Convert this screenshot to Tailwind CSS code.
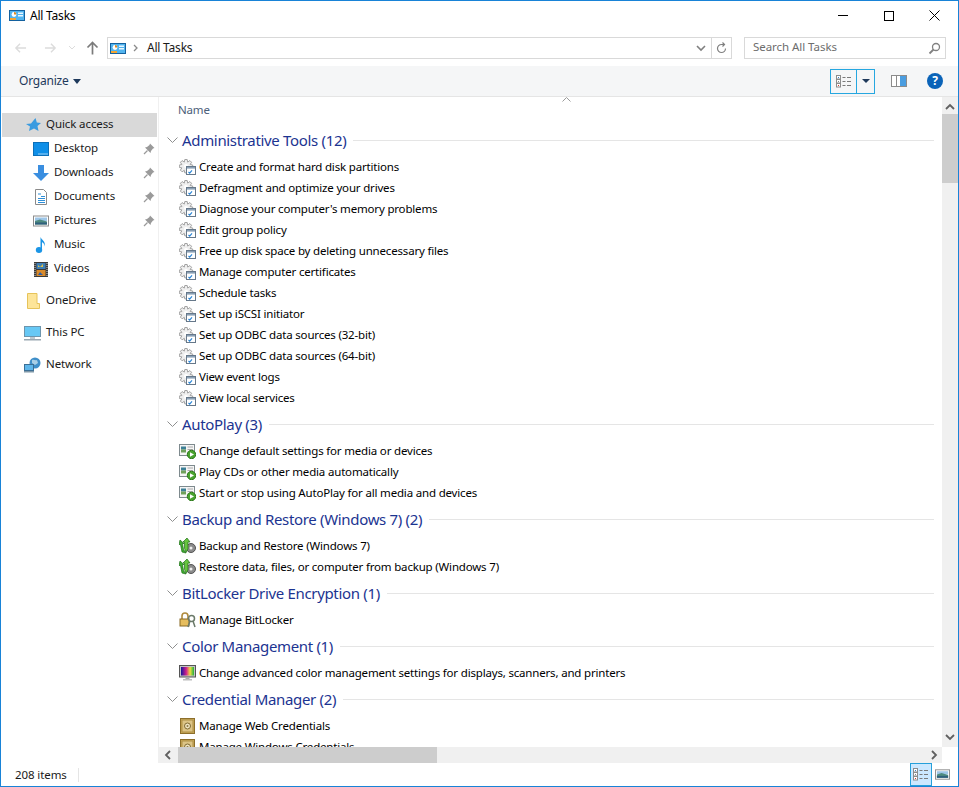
<!DOCTYPE html>
<html><head><meta charset="utf-8">
<script src="https://cdn.jsdelivr.net/npm/@tailwindcss/browser@4"></script>
</head>
<body class="m-0 bg-white">
<svg class="absolute w-0 h-0" width="0" height="0">
<defs><linearGradient id="rb" x1="0" x2="1" y1="0" y2="0"><stop offset="0" stop-color="#14149c"/><stop offset=".4" stop-color="#d0208c"/><stop offset=".7" stop-color="#f0e040"/><stop offset="1" stop-color="#20b040"/></linearGradient></defs>
<symbol id="cp" viewBox="0 0 16 11"><rect x="0.500" y="0.500" width="15" height="10" fill="#52b4ee" stroke="#14619f"/><circle cx="5" cy="4.500" r="2.400" fill="#fff"/><path d="M5 4.500V2.100A2.400 2.400 0 0 1 7.400 4.500Z" fill="#e08a20"/><rect x="9" y="2.500" width="5" height="1.500" fill="#e8f6ff"/><rect x="9" y="5" width="5" height="1.500" fill="#e8f6ff"/><rect x="1" y="8" width="6" height="2" fill="#f3a530"/></symbol>
<symbol id="gear" viewBox="0 0 17 16"><path d="M5.800 .5h2.400l.5 2.600 2.200-1.500 1.700 1.700-1.500 2.200 2.600.5v2.400l-2.600.5 1.500 2.200-1.700 1.700-2.200-1.500-.5 2.600H5.800l-.5-2.600-2.200 1.500-1.700-1.700 1.500-2.200-2.600-.5V6l2.600-.5L1.400 3.300l1.700-1.700 2.200 1.500z" fill="#efefef" stroke="#a2a2a2"/><circle cx="7" cy="7" r="2" fill="#fff"/><rect x="7.500" y="7.500" width="9" height="8" fill="#fff" stroke="#66788a"/><rect x="8" y="8" width="8" height="1.600" fill="#8aa0b5"/><path d="M9.500 13l1.200 1.200 2.300-2.800" fill="none" stroke="#2c86d6" stroke-width="1.200"/></symbol>
<symbol id="play" viewBox="0 0 17 16"><rect x="0.500" y="1.500" width="15" height="11" fill="#f5f5f5" stroke="#7e8a8e"/><rect x="2" y="3.500" width="5" height="3" fill="#3c7f96"/><rect x="2" y="6.500" width="5" height="3" fill="#6fa05a"/><path d="M8.500 4h5.500M8.500 6.500h5.500M8.500 9h2" stroke="#a8a8a8"/><circle cx="12.500" cy="11.500" r="4.200" fill="#4aa32f" stroke="#2e7a1c"/><path d="M11 9.300l4 2.200-4 2.200z" fill="#fff"/></symbol>
<symbol id="backup" viewBox="0 0 17 16"><circle cx="12" cy="10" r="4.500" fill="#8b8b8b" stroke="#555"/><circle cx="12" cy="10" r="1.500" fill="#eee"/><path d="M1 2l4 3.500H3.500l1 6 2.500 3.500-4-1-1.500-7.500H0z" fill="#3fae2f" stroke="#1f6f18" stroke-width=".7"/><path d="M8 0l3 4H9v7l-2 3.500-1.500-4V4H4z" fill="#66c43e" stroke="#1f6f18" stroke-width=".7"/></symbol>
<symbol id="lock" viewBox="0 0 17 16"><path d="M3 7V4a3 3 0 0 1 6 0v3" fill="none" stroke="#b08b3d" stroke-width="1.600"/><rect x="1" y="7" width="9" height="7" fill="#e6bd5d" stroke="#8a6a25"/><circle cx="12.500" cy="6.500" r="3" fill="none" stroke="#6b7a6a" stroke-width="1.500"/><path d="M11 9l-2 6M14 9l2 6" stroke="#6b7a6a" stroke-width="1.500"/></symbol>
<symbol id="color" viewBox="0 0 17 16"><rect x="0.500" y="0.500" width="16" height="11.500" fill="#c4c4c4" stroke="#555"/><rect x="2" y="2" width="13" height="8.500" fill="url(#rb)"/><rect x="6.500" y="12" width="4" height="2" fill="#aaa"/><rect x="4" y="14" width="9" height="1.500" fill="#bdbdbd"/></symbol>
<symbol id="cred" viewBox="0 0 17 16"><rect x="1.500" y="0.500" width="14" height="15" fill="#c9a85a" stroke="#8d6f2b"/><rect x="3" y="2" width="11" height="12" fill="#dcc486" stroke="#ae8f45"/><circle cx="8.500" cy="8" r="3" fill="#efe4c2" stroke="#7f6a33"/><circle cx="8.500" cy="8" r="1" fill="#8d7a45"/></symbol>
<symbol id="pin" viewBox="0 0 12 12"><path d="M7 .5l4.500 4.500-1.500.5L8 8l-.5 2L2 4.500 4 4 6.500 2z" fill="#9a9a9a"/><path d="M4.500 7.500L1 11" stroke="#9a9a9a" stroke-width="1.300"/></symbol>
<symbol id="chev" viewBox="0 0 11 7"><path d="M.5.500l5 5 5-5" fill="none" stroke="#8e8f8f"/></symbol>
<symbol id="det" viewBox="0 0 16 13"><rect x="0.500" y="0.500" width="4" height="3.500" fill="#fff" stroke="#8c8c8c"/><rect x="0.500" y="4.500" width="4" height="3.500" fill="#fff" stroke="#8c8c8c"/><rect x="0.500" y="8.500" width="4" height="3.500" fill="#fff" stroke="#8c8c8c"/><rect x="2" y="2" width="1" height="1" fill="#3b7fc4"/><rect x="2" y="6" width="1" height="1" fill="#888"/><rect x="2" y="10" width="1" height="1" fill="#d93a2b"/><path d="M6.500 2.500h3M11 2.500h4M6.500 6.500h3M11 6.500h4M6.500 10.500h3M11 10.500h4" stroke="#7a7a7a"/></symbol>
<symbol id="pic" viewBox="0 0 16 11"><rect x="0.500" y="0.500" width="15" height="10" fill="#fff" stroke="#8c8c8c"/><rect x="2" y="2" width="12" height="3.500" fill="#9ec6e8"/><path d="M2 5.500l5-1.500 7 2V9H2z" fill="#4e8a7f"/><rect x="2" y="7" width="12" height="2" fill="#2f5f7d"/></symbol>
</svg>

<div class="w-[959px] h-[787px] flex flex-col overflow-hidden border border-[#1883d7] font-['Noto_Sans',sans-serif] text-[12px] tracking-[-0.22px] text-black">
  <!-- title -->
  <div class="h-[29px] flex items-center shrink-0 pl-[8px]">
    <svg class="w-[16px] h-[11px] mr-[5px]"><use href="#cp"/></svg>
    <span>All Tasks</span>
    <div class="ml-auto flex items-center">
      <div class="w-[46px] flex justify-center"><div class="w-[10px] h-[1px] bg-black"></div></div>
      <div class="w-[46px] flex justify-center"><div class="w-[10px] h-[10px] border border-black"></div></div>
      <svg class="ml-[17px] mr-[18px] w-[11px] h-[11px]" viewBox="0 0 11 11"><path d="M.5.500l10 10M10.500.500l-10 10" stroke="#000" fill="none"/></svg>
    </div>
  </div>
  <!-- nav -->
  <div class="h-[36px] flex items-start shrink-0 pt-[7px]">
    <div class="w-[106px] h-[22px] flex items-center pl-[13px]">
      <svg class="w-[13px] h-[12px]" viewBox="0 0 14 12"><path d="M13 6H2M6.500 1.500L2 6l4.500 4.500" fill="none" stroke="#dcdcdc" stroke-width="1.500"/></svg>
      <svg class="ml-[17px] w-[13px] h-[12px]" viewBox="0 0 14 12"><path d="M1 6h11M7.500 1.500L12 6l-4.500 4.500" fill="none" stroke="#dcdcdc" stroke-width="1.500"/></svg>
      <svg class="ml-[11px] w-[8px] h-[6px]" viewBox="0 0 8 6"><path d="M1 1l3 3 3-3" fill="none" stroke="#dcdcdc"/></svg>
      <svg class="ml-[10px] w-[13px] h-[14px]" viewBox="0 0 13 14"><path d="M6.500 13.500V2M1.500 6.500l5-5 5 5" fill="none" stroke="#7b7b7b" stroke-width="1.700"/></svg>
    </div>
    <div class="w-[625px] h-[22px] border border-[#d9d9d9] flex items-center">
      <svg class="ml-[2px] w-[16px] h-[11px]"><use href="#cp"/></svg>
      <svg class="ml-[7px] w-[5px] h-[8px]" viewBox="0 0 5 8"><path d="M1 1l3 3-3 3" fill="none" stroke="#8a8a8a" stroke-width="1.300"/></svg>
      <span class="ml-[9px] text-[#1a1a1a]">All Tasks</span>
      <svg class="ml-auto mr-[4px] w-[10px] h-[7px]" viewBox="0 0 10 7"><path d="M1 1l4 4 4-4" fill="none" stroke="#808080" stroke-width="1.600"/></svg>
      <div class="w-[1px] h-full bg-[#d9d9d9] ml-[1px]"></div>
      <svg class="mx-[4px] w-[11px] h-[12px]" viewBox="0 0 11 12"><path d="M9.500 6.500A4 4 0 1 1 5.500 2.500H8M6.500.500L8.500 2.500 6.500 4.500" fill="none" stroke="#808080" stroke-width="1.200"/></svg>
    </div>
    <div class="ml-[12px] w-[202px] h-[22px] border border-[#d9d9d9] flex items-center pl-[8px] text-[#6d6d6d] text-[11.500px] tracking-[-0.05px]">
      <span class="mb-[2px]">Search All Tasks</span>
      <svg class="ml-auto mr-[4px] w-[13px] h-[13px]" viewBox="0 0 13 13"><circle cx="8" cy="5" r="3.500" fill="none" stroke="#808080" stroke-width="1.300"/><path d="M5.500 7.500L1.500 11.500" stroke="#808080" stroke-width="1.800"/></svg>
    </div>
  </div>
  <!-- toolbar -->
  <div class="h-[31px] shrink-0 bg-[#f5f6f7] border-b border-[#e5e5e5] flex items-center">
    <span class="ml-[18px] text-[#1e395b]">Organize</span>
    <svg class="ml-[5px] w-[8px] h-[5px]" viewBox="0 0 8 5"><path d="M0 0h8L4 5z" fill="#1e395b"/></svg>
    <div class="ml-auto flex items-center">
      <div class="w-[27px] h-[25px] border border-[#26a7e0] flex items-center justify-center"><svg class="w-[16px] h-[13px]"><use href="#det"/></svg></div>
      <div class="w-[18px] h-[25px] border border-l-0 border-[#26a7e0] flex items-center justify-center"><svg class="w-[8px] h-[4px]" viewBox="0 0 8 4"><path d="M0 0h8L4 4z" fill="#1e395b"/></svg></div>
      <svg class="ml-[16px] w-[16px] h-[12px]" viewBox="0 0 16 12"><rect x=".5" y=".5" width="15" height="11" fill="#fff" stroke="#8b8b8b"/><path d="M5.500 .5v11" stroke="#8b8b8b"/><rect x="9" y="1" width="6" height="10" fill="#4a9de0"/></svg>
      <div class="ml-[20px] mr-[15px] w-[16px] h-[16px] rounded-full bg-[#0a63b8] text-white text-[12px] font-bold flex items-center justify-center tracking-normal">?</div>
    </div>
  </div>
  <!-- body -->
  <div class="flex-1 flex min-h-0">
    <!-- sidebar -->
    <div class="w-[158px] shrink-0 border-r border-[#f0f0f0] pt-[16px] text-[#1a1a1a] text-[11.500px] tracking-[-0.1px]">
      <div class="h-[24px] mr-[1px] ml-[1px] bg-[#d9d9d9] flex items-center pl-[24px]">
        <svg class="w-[15px] h-[14px] mr-[5px]" viewBox="0 0 15 14"><path d="M9.500 0l1.300 4.500L15 5l-3.500 3 1 5L8 10.500 3 13l1-4.500L0 6l5-.5z" fill="#3a9be0"/></svg>
        <span class="mb-[2px]">Quick access</span>
      </div>
      <div class="h-[24px] flex items-center pl-[32px] pr-[3px]">
        <svg class="w-[16px] h-[14px] mr-[5px]" viewBox="0 0 16 14"><rect x=".5" y="0.500" width="15" height="13" fill="#0f8fe8" stroke="#0c6fb8"/><path d="M5 12h10" stroke="#9fd0f2"/></svg><span class="mb-[2px]">Desktop</span><svg class="ml-auto w-[12px] h-[12px]"><use href="#pin"/></svg></div>
      <div class="h-[24px] flex items-center pl-[32px] pr-[3px]">
        <svg class="w-[16px] h-[16px] mr-[5px]" viewBox="0 0 16 16"><path d="M5 0h6v8h5l-8 8-8-8h5z" fill="#3a8ee0"/></svg><span class="mb-[2px]">Downloads</span><svg class="ml-auto w-[12px] h-[12px]"><use href="#pin"/></svg></div>
      <div class="h-[24px] flex items-center pl-[32px] pr-[3px]">
        <svg class="w-[16px] h-[16px] mr-[5px]" viewBox="0 0 16 16"><path d="M2.500 .5h8l3 3v12h-11z" fill="#fff" stroke="#8a8a8a"/><path d="M5 5h3M8 7.500h4M5 9.500h7M5 11.500h7M5 13.500h7" stroke="#2f8fd8"/></svg><span class="mb-[2px]">Documents</span><svg class="ml-auto w-[12px] h-[12px]"><use href="#pin"/></svg></div>
      <div class="h-[24px] flex items-center pl-[32px] pr-[3px]">
        <svg class="w-[16px] h-[12px] mr-[5px]"><use href="#pic"/></svg><span class="mb-[2px]">Pictures</span><svg class="ml-auto w-[12px] h-[12px]"><use href="#pin"/></svg></div>
      <div class="h-[24px] flex items-center pl-[32px] pr-[3px]">
        <svg class="w-[16px] h-[16px] mr-[5px]" viewBox="0 0 16 16"><ellipse cx="6" cy="13" rx="3.200" ry="3" fill="#1b95e6"/><path d="M7.500 13V0c1 3 5 4 4.500 9.500-.5-3-2-3.500-3-4.500V13z" fill="#1b95e6"/></svg><span class="mb-[2px]">Music</span></div>
      <div class="h-[24px] flex items-center pl-[32px] pr-[3px]">
        <svg class="w-[16px] h-[15px] mr-[5px]" viewBox="0 0 16 15"><rect x="1" y="0" width="14" height="15" fill="#3a3a3a"/><rect x="3.500" y="1" width="9" height="6" fill="#3f7fb5"/><rect x="3.500" y="8" width="9" height="6" fill="#d98a2b"/><path d="M5 3l2 2 3-3v3H5z" fill="#e0c24a"/><path d="M5 13l2-3 3 3z" fill="#2f5fa5"/><path d="M2 1v13M14 1v13" stroke="#cfcfcf" stroke-dasharray="1 1"/></svg><span class="mb-[2px]">Videos</span></div>
      <div class="h-[24px] flex items-center pl-[26px] mt-[8px]">
        <svg class="w-[13px] h-[16px] mr-[6px]" viewBox="0 0 13 16"><path d="M.5.500h9.500v10h2.500v5H.5z" fill="#fde599" stroke="#e6c35a"/></svg><span class="mb-[2px]">OneDrive</span></div>
      <div class="h-[24px] flex items-center pl-[23px] mt-[8px]">
        <svg class="w-[17px] h-[15px] mr-[5px]" viewBox="0 0 17 15"><rect x=".5" y=".5" width="16" height="10" fill="#67c8f5" stroke="#6d95ad"/><rect x="6" y="11" width="5" height="2" fill="#bcc8d0"/><rect x="0" y="13" width="17" height="1.500" fill="#9aa8b2"/></svg><span class="mb-[2px]">This PC</span></div>
      <div class="h-[24px] flex items-center pl-[23px] mt-[8px]">
        <svg class="w-[17px] h-[16px] mr-[5px]" viewBox="0 0 17 16"><circle cx="11" cy="6" r="5.500" fill="#3f8fc9"/><path d="M8 3c2-1 3 1 5 0l1 3-3 2-3-2z" fill="#a9cfe6"/><rect x=".5" y="7.500" width="9" height="6" fill="#5fb6ea" stroke="#3c6f95"/><rect x="0" y="14" width="10" height="1.500" fill="#7f97a8"/></svg><span class="mb-[2px]">Network</span></div>
    </div>
    <!-- content -->
    <div class="flex-1 min-w-0 flex">
      <div class="flex-1 min-w-0 flex flex-col">
        <div class="flex-1 min-h-0 overflow-hidden relative text-[11.500px] tracking-[-0.18px]">
          <svg class="absolute left-[403px] top-[0px] w-[9px] h-[5px]" viewBox="0 0 9 5"><path d="M.5 4.500l4-4 4 4" fill="none" stroke="#9a9a9a"/></svg>
          <div class="h-[25px] flex items-center pl-[19px] text-[#4c607a]">Name</div>
          <div class="pt-[6px] pr-[8px]" id="list">
            <div class="h-[24px] flex items-center pl-[8px] text-[#1c3491]"><svg class="w-[11px] h-[7px] mr-[4px]"><use href="#chev"/></svg><span class="text-[15px] tracking-[-0.33px]">Administrative Tools (12)</span><div class="ml-[7px] flex-1 h-[1px] bg-[#e5e5e5]"></div></div>
            <div class="mt-[4px]">
              <div class="h-[21px] flex items-center pl-[20px]"><svg class="w-[17px] h-[16px] mr-[3px]"><use href="#gear"/></svg>Create and format hard disk partitions</div>
              <div class="h-[21px] flex items-center pl-[20px]"><svg class="w-[17px] h-[16px] mr-[3px]"><use href="#gear"/></svg>Defragment and optimize your drives</div>
              <div class="h-[21px] flex items-center pl-[20px]"><svg class="w-[17px] h-[16px] mr-[3px]"><use href="#gear"/></svg>Diagnose your computer's memory problems</div>
              <div class="h-[21px] flex items-center pl-[20px]"><svg class="w-[17px] h-[16px] mr-[3px]"><use href="#gear"/></svg>Edit group policy</div>
              <div class="h-[21px] flex items-center pl-[20px]"><svg class="w-[17px] h-[16px] mr-[3px]"><use href="#gear"/></svg>Free up disk space by deleting unnecessary files</div>
              <div class="h-[21px] flex items-center pl-[20px]"><svg class="w-[17px] h-[16px] mr-[3px]"><use href="#gear"/></svg>Manage computer certificates</div>
              <div class="h-[21px] flex items-center pl-[20px]"><svg class="w-[17px] h-[16px] mr-[3px]"><use href="#gear"/></svg>Schedule tasks</div>
              <div class="h-[21px] flex items-center pl-[20px]"><svg class="w-[17px] h-[16px] mr-[3px]"><use href="#gear"/></svg>Set up iSCSI initiator</div>
              <div class="h-[21px] flex items-center pl-[20px]"><svg class="w-[17px] h-[16px] mr-[3px]"><use href="#gear"/></svg>Set up ODBC data sources (32-bit)</div>
              <div class="h-[21px] flex items-center pl-[20px]"><svg class="w-[17px] h-[16px] mr-[3px]"><use href="#gear"/></svg>Set up ODBC data sources (64-bit)</div>
              <div class="h-[21px] flex items-center pl-[20px]"><svg class="w-[17px] h-[16px] mr-[3px]"><use href="#gear"/></svg>View event logs</div>
              <div class="h-[21px] flex items-center pl-[20px]"><svg class="w-[17px] h-[16px] mr-[3px]"><use href="#gear"/></svg>View local services</div>
            </div>
            <div class="mt-[4px] h-[24px] flex items-center pl-[8px] text-[#1c3491]"><svg class="w-[11px] h-[7px] mr-[4px]"><use href="#chev"/></svg><span class="text-[15px] tracking-[-0.33px]">AutoPlay (3)</span><div class="ml-[7px] flex-1 h-[1px] bg-[#e5e5e5]"></div></div>
            <div class="mt-[4px]">
              <div class="h-[21px] flex items-center pl-[20px]"><svg class="w-[17px] h-[16px] mr-[3px]"><use href="#play"/></svg>Change default settings for media or devices</div>
              <div class="h-[21px] flex items-center pl-[20px]"><svg class="w-[17px] h-[16px] mr-[3px]"><use href="#play"/></svg>Play CDs or other media automatically</div>
              <div class="h-[21px] flex items-center pl-[20px]"><svg class="w-[17px] h-[16px] mr-[3px]"><use href="#play"/></svg>Start or stop using AutoPlay for all media and devices</div>
            </div>
            <div class="mt-[4px] h-[24px] flex items-center pl-[8px] text-[#1c3491]"><svg class="w-[11px] h-[7px] mr-[4px]"><use href="#chev"/></svg><span class="text-[15px] tracking-[-0.33px]">Backup and Restore (Windows 7) (2)</span><div class="ml-[7px] flex-1 h-[1px] bg-[#e5e5e5]"></div></div>
            <div class="mt-[4px]">
              <div class="h-[21px] flex items-center pl-[20px]"><svg class="w-[17px] h-[16px] mr-[3px]"><use href="#backup"/></svg>Backup and Restore (Windows 7)</div>
              <div class="h-[21px] flex items-center pl-[20px]"><svg class="w-[17px] h-[16px] mr-[3px]"><use href="#backup"/></svg>Restore data, files, or computer from backup (Windows 7)</div>
            </div>
            <div class="mt-[4px] h-[24px] flex items-center pl-[8px] text-[#1c3491]"><svg class="w-[11px] h-[7px] mr-[4px]"><use href="#chev"/></svg><span class="text-[15px] tracking-[-0.33px]">BitLocker Drive Encryption (1)</span><div class="ml-[7px] flex-1 h-[1px] bg-[#e5e5e5]"></div></div>
            <div class="mt-[4px]">
              <div class="h-[21px] flex items-center pl-[20px]"><svg class="w-[17px] h-[16px] mr-[3px]"><use href="#lock"/></svg>Manage BitLocker</div>
            </div>
            <div class="mt-[4px] h-[24px] flex items-center pl-[8px] text-[#1c3491]"><svg class="w-[11px] h-[7px] mr-[4px]"><use href="#chev"/></svg><span class="text-[15px] tracking-[-0.33px]">Color Management (1)</span><div class="ml-[7px] flex-1 h-[1px] bg-[#e5e5e5]"></div></div>
            <div class="mt-[4px]">
              <div class="h-[21px] flex items-center pl-[20px]"><svg class="w-[17px] h-[16px] mr-[3px]"><use href="#color"/></svg>Change advanced color management settings for displays, scanners, and printers</div>
            </div>
            <div class="mt-[4px] h-[24px] flex items-center pl-[8px] text-[#1c3491]"><svg class="w-[11px] h-[7px] mr-[4px]"><use href="#chev"/></svg><span class="text-[15px] tracking-[-0.33px]">Credential Manager (2)</span><div class="ml-[7px] flex-1 h-[1px] bg-[#e5e5e5]"></div></div>
            <div class="mt-[4px]">
              <div class="h-[21px] flex items-center pl-[20px]"><svg class="w-[17px] h-[16px] mr-[3px]"><use href="#cred"/></svg>Manage Web Credentials</div>
              <div class="h-[21px] flex items-center pl-[20px]"><svg class="w-[17px] h-[16px] mr-[3px]"><use href="#cred"/></svg>Manage Windows Credentials</div>
            </div>
          </div>
        </div>
        <!-- h scrollbar -->
        <div class="h-[16px] shrink-0 bg-[#f0f0f0] flex items-center">
          <svg class="ml-[5px] w-[7px] h-[10px]" viewBox="0 0 7 10"><path d="M6 1L2 5l4 4" fill="none" stroke="#606060" stroke-width="1.800"/></svg>
          <div class="ml-[7px] w-[259px] h-full bg-[#cdcdcd]"></div>
          <svg class="ml-auto mr-[4px] w-[7px] h-[10px]" viewBox="0 0 7 10"><path d="M1 1l4 4-4 4" fill="none" stroke="#606060" stroke-width="1.800"/></svg>
        </div>
      </div>
      <!-- v scrollbar -->
      <div class="w-[16px] shrink-0 flex flex-col mb-[16px] bg-[#f0f0f0] items-center">
        <svg class="mt-[6px] w-[10px] h-[7px]" viewBox="0 0 10 7"><path d="M1 6l4-4 4 4" fill="none" stroke="#606060" stroke-width="1.800"/></svg>
        <div class="mt-[4px] w-full h-[69px] bg-[#cdcdcd]"></div>
        <svg class="mt-auto mb-[6px] w-[10px] h-[7px]" viewBox="0 0 10 7"><path d="M1 1l4 4 4-4" fill="none" stroke="#606060" stroke-width="1.800"/></svg>
      </div>
    </div>
  </div>
  <!-- status -->
  <div class="h-[23px] shrink-0 flex items-center text-[#1a1a1a] text-[11.500px] tracking-[-0.1px]">
    <span class="ml-[14px]">208 items</span>
    <div class="ml-[11px] w-[1px] h-[14px] bg-[#e5e5e5]"></div>
    <div class="ml-auto w-[22px] h-[23px] bg-[#cce8ff] border border-[#26a0da] flex items-center justify-center"><svg class="w-[16px] h-[13px]"><use href="#det"/></svg></div>
    <svg class="ml-[3px] mr-[8px] w-[15px] h-[11px]"><use href="#pic"/></svg>
  </div>
</div>
</body></html>
